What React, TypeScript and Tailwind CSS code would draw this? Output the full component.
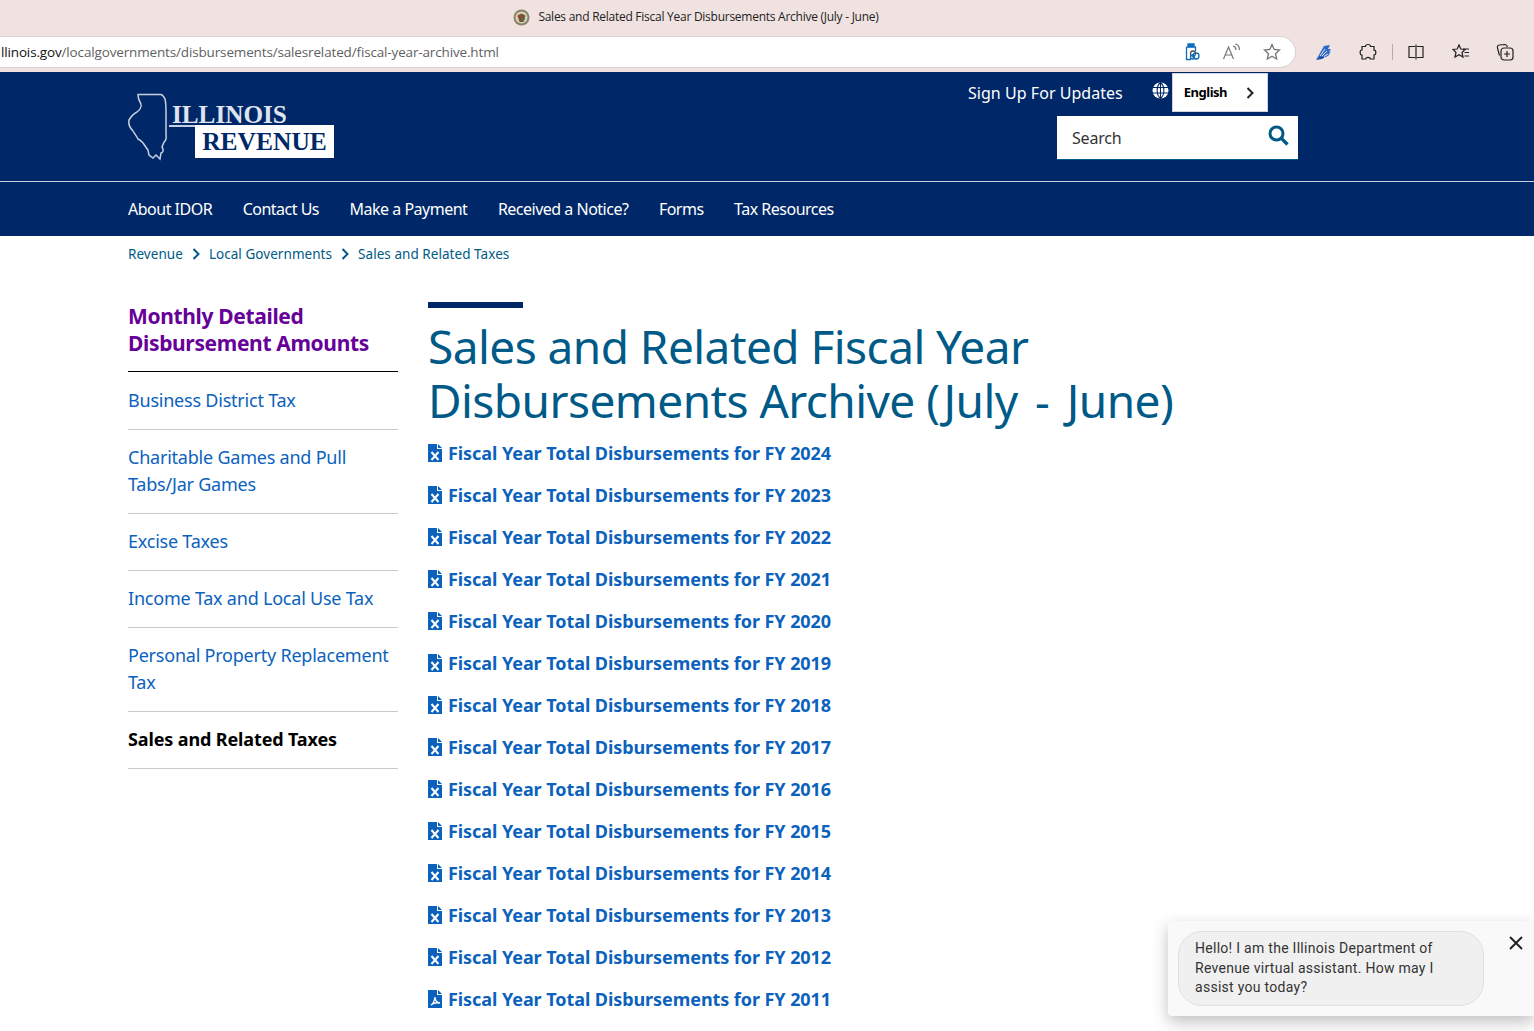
import React from "react";

const years = [2024, 2023, 2022, 2021, 2020, 2019, 2018, 2017, 2016, 2015, 2014, 2013, 2012, 2011];
const nav = ["About IDOR", "Contact Us", "Make a Payment", "Received a Notice?", "Forms", "Tax Resources"];

function FileIcon({ pdf }: { pdf?: boolean }) {
  return (
    <svg width="14" height="18" viewBox="0 0 14 18" className="shrink-0">
      <path d="M0 0H9V5H14V18H0Z" fill="#0b62bd" />
      <path d="M10 0L14 4H10Z" fill="#0b62bd" />
      {pdf ? (
        <path d="M3 15C5 14 7 10 7 7C7 10 9 12.500 12 13C9 12.500 5 13 3 15Z" fill="none" stroke="#fff" strokeWidth="1.300" />
      ) : (
        <path d="M3.500 8L10.500 16M10.500 8L3.500 16" stroke="#fff" strokeWidth="2" />
      )}
    </svg>
  );
}

function Chevron({ className, color = "#005a87" }: { className?: string; color?: string }) {
  return (
    <svg width="8" height="12" viewBox="0 0 8 12" className={className}>
      <path d="M1.500 1L6.500 6L1.500 11" fill="none" stroke={color} strokeWidth="2" />
    </svg>
  );
}

function Toolbar() {
  return (
    <div className="relative h-[72px] bg-[#f0e2e1] flex flex-col font-['Open_Sans',sans-serif]">
      <div className="h-[34px] mb-[2px] flex items-center justify-center gap-2 pr-[142px] text-[12px] text-[#222]">
        <svg width="17" height="17" viewBox="0 0 17 17">
          <circle cx="8.500" cy="8.500" r="8" fill="#8b8367" />
          <circle cx="8.500" cy="8.500" r="6" fill="#d9d2b8" />
          <path d="M4.500 6.500L8.500 4.500L12.500 6.500L10.500 13H6.500Z" fill="#6d5a3a" />
          <circle cx="6.500" cy="7.500" r="1.700" fill="#a33c2e" />
          <circle cx="10.500" cy="10" r="1.300" fill="#3f7a4a" />
        </svg>
        <span className="tracking-[-0.26px]">Sales and Related Fiscal Year Disbursements Archive (July - June)</span>
      </div>
      <div className="flex items-center h-[32px]">
        <div className="w-[1296px] h-[32px] bg-white rounded-r-[16px] border border-l-0 border-[#d8d4d3] flex items-center justify-between pr-[14px] text-[13.5px] tracking-[-0.15px] text-[#5f5f5f]">
          <span className="ml-[1px] whitespace-nowrap"><span className="text-[#111]">llinois.gov</span>/localgovernments/disbursements/salesrelated/fiscal-year-archive.html</span>
          <div className="flex items-center gap-[21px]">
            <svg width="18" height="18" viewBox="0 0 18 18" fill="none" stroke="#0f6cbd" strokeWidth="1.300">
              <path d="M5 1H11V3.500H5Z" fill="#0f6cbd" />
              <path d="M3.500 4H12.500V8M8 16.500H3.500V4" />
              <circle cx="10" cy="10.500" r="2.500" stroke="#555" />
              <circle cx="13" cy="13" r="3" />
              <circle cx="9.500" cy="14" r="2" />
            </svg>
            <svg width="20" height="18" viewBox="0 0 20 18" fill="none" stroke="#777" strokeWidth="1.200">
              <path d="M1.500 16L6.500 4L11.500 16M3.500 12H9.500" />
              <path d="M11 3C13 3.500 14 5 14 7M13 1C16 1.500 17.500 4 17.500 7" />
            </svg>
            <svg width="18" height="18" viewBox="0 0 18 18" fill="none" stroke="#777" strokeWidth="1.300">
              <path d="M9 1.500L11.200 6.500L16.500 7L12.500 10.700L13.700 16L9 13.200L4.300 16L5.500 10.700L1.500 7L6.800 6.500Z" />
            </svg>
          </div>
        </div>
        <div className="flex items-center ml-[19px]">
          <svg width="17" height="17" viewBox="0 0 17 17">
            <path d="M1 16L9 2L15 1L13 5H16L14 7.500H16L13.500 10.500H15L11 13H4Z" fill="#2a6bc9" />
            <path d="M5 12L10 5M7 12L12 7M9 12.500L13 10" stroke="#f0e2e1" strokeWidth="1" />
            <path d="M1 16L4 13H10L7 15Z" fill="#1a4a9a" />
          </svg>
          <svg width="18" height="18" viewBox="0 0 18 18" fill="none" stroke="#222" strokeWidth="1.200" className="ml-[27px]">
            <path d="M6.500 3.500C6.500 0.800 11.500 0.800 11.500 3.500H15V7.200C17.500 7.200 17.500 12 15 12V16H11.200C11.200 13.800 6.800 13.800 6.800 16H3V12.200C0.500 12.200 0.500 7 3 7V3.500Z" />
          </svg>
          <div className="ml-[15px] w-px h-[16px] bg-[#b5aaaa]" />
          <svg width="16" height="16" viewBox="0 0 16 16" fill="none" stroke="#222" strokeWidth="1.200" className="ml-[15px]">
            <path d="M7 2.500H1V13.500H7M9 2.500H15V13.500H9M8 0.500V15.500" />
          </svg>
          <svg width="18" height="18" viewBox="0 0 18 18" fill="none" stroke="#222" strokeWidth="1.200" className="ml-[28px]">
            <path d="M7 2L8.800 6L13 6.500L10 9.500L11 14L7 11.700L3 14L4 9.500L1 6.500L5.200 6Z" />
            <path d="M11 6H17M12.500 9.500H17M12.500 13H17" />
          </svg>
          <svg width="18" height="18" viewBox="0 0 18 18" fill="none" stroke="#222" strokeWidth="1.200" className="ml-[26px]">
            <path d="M3.500 12.500L1.500 5C1 3 2 2 3.500 2L9 1.500C10.500 1.500 11 2.500 11.500 4" />
            <rect x="5" y="5" width="12" height="12" rx="3" />
            <path d="M11 8V14M8 11H14" />
          </svg>
        </div>
      </div>
    </div>
  );
}

function Logo() {
  return (
    <div className="relative w-[206px] h-[68px]">
      <svg width="44" height="68" viewBox="0 0 44 68" className="absolute left-0 top-0">
        <path
          d="M10 1.500H33C35 2 36 4 37 6C38 10 38 14 38 20V40C38 44 39 46 37 48C35 50 35 52 34 54C36 57 35 60 33 60L32 66L28 62L25 65L21 62L20 57C16 52 15 48 10 46C8 42 6 40 5 38C2 35 0 32 1 27C4 22 7 20 9 19C13 16 14 12 12 9C10 6 10 4 10 1.500Z"
          fill="none"
          stroke="#c6cfe0"
          strokeWidth="1.500"
        />
      </svg>
      <div className="absolute left-[44px] top-[7px] font-['Liberation_Serif',serif] font-bold text-[25.2px] leading-[30px] text-[#dfe4ee] whitespace-nowrap">ILLINOIS</div>
      <div className="absolute left-[41px] top-[32px] w-[28px] h-[1.500px] bg-[#c6cfe0]" />
      <div className="absolute left-[67px] top-[32px] w-[139px] h-[33px] bg-white flex items-center justify-center font-['Liberation_Serif',serif] font-bold text-[25.5px] leading-[30px] text-[#002868]">REVENUE</div>
    </div>
  );
}

function Header() {
  return (
    <header className="bg-[#002868] font-['Noto_Sans',sans-serif]">
      <div className="relative h-[109px] flex items-start pl-[128px] pt-[21px]">
        <Logo />
        <div className="absolute left-[968px] top-[1px] flex items-center h-[39px] text-white">
          <span className="text-[16px] tracking-[0.04px]">Sign Up For Updates</span>
          <svg width="17" height="17" viewBox="0 0 17 17" className="ml-[29px] mb-[4px]">
            <circle cx="8.500" cy="8.500" r="8" fill="#fff" />
            <path d="M0 5.500H17M0 11H17M8.500 0V17M8.500 0.500C4 4 4 13 8.500 16.500C13 13 13 4 8.500 0.500" fill="none" stroke="#002868" strokeWidth="1.100" />
          </svg>
          <div className="ml-[3px] w-[96px] h-[39px] bg-white border border-[#d0d4dc] flex items-center justify-between pl-[11px] pr-[13px]">
            <span className="font-bold text-[13px] tracking-[-0.5px] text-black">English</span>
            <Chevron color="#222" />
          </div>
        </div>
        <div className="absolute left-[1057px] top-[44px] w-[241px] h-[44px] bg-white flex items-center justify-between pl-[15px] pr-[9px] border-b border-[#005a87]">
          <span className="text-[16px] text-[#333] tracking-[-0.2px]">Search</span>
          <svg width="21" height="21" viewBox="0 0 21 21" fill="none" stroke="#005a87" className="mb-[5px]">
            <circle cx="8.500" cy="8.500" r="6.500" strokeWidth="3" />
            <path d="M13.500 13.500L19.500 19.500" strokeWidth="3.200" />
          </svg>
        </div>
      </div>
      <div className="border-t border-[#c8d0de] h-[55px] flex items-center pl-[128px] gap-[30.5px] text-white text-[16px] tracking-[-0.5px]">
        {nav.map((n) => (
          <span key={n}>{n}</span>
        ))}
      </div>
    </header>
  );
}

function Side({ children, active, first }: { children: React.ReactNode; active?: boolean; first?: boolean }) {
  return (
    <div className={`border-b border-[#c9c9c9] pb-[15px] leading-[27px] text-[18px] ${first ? "pt-[15px]" : "pt-[14px]"} ${active ? "font-bold text-black tracking-[-0.13px]" : "text-[#0b62bd] tracking-[-0.22px]"}`}>
      {children}
    </div>
  );
}

export default function App() {
  return (
    <div className="w-[1534px] h-[1031px] overflow-hidden relative bg-white font-['Noto_Sans',sans-serif]">
      <Toolbar />
      <Header />
      <div className="h-[36px] mb-[1px] pl-[128px] flex items-center text-[13.5px] tracking-[0.05px] text-[#005a87]">
        <span>Revenue</span>
        <Chevron className="mx-[9px]" />
        <span>Local Governments</span>
        <Chevron className="mx-[9px]" />
        <span>Sales and Related Taxes</span>
      </div>
      <div className="flex pl-[128px] pt-[29px] gap-[30px]">
        <aside className="w-[270px] shrink-0">
          <div className="border-b border-black pt-[1px] pb-[14px] text-[21px] tracking-[-0.35px] leading-[27px] font-bold text-[#660099]">
            Monthly Detailed<br />Disbursement Amounts
          </div>
          <Side first>Business District Tax</Side>
          <Side>Charitable Games and Pull<br />Tabs/Jar Games</Side>
          <Side>Excise Taxes</Side>
          <Side>Income Tax and Local Use Tax</Side>
          <Side>Personal Property Replacement<br />Tax</Side>
          <Side active>Sales and Related Taxes</Side>
        </aside>
        <main className="flex-1">
          <div className="w-[95px] h-[6px] bg-[#002868]" />
          <h1 className="mt-[11px] text-[46px] leading-[54px] text-[#005a87] tracking-[-0.55px]">
            Sales and Related Fiscal Year<br />Disbursements Archive (July <span className="px-[6px]">-</span> June)
          </h1>
          <ul className="mt-[5px]">
            {years.map((y) => (
              <li key={y} className="h-[42px] flex items-center gap-[6px] text-[18px] font-bold text-[#0b62bd] tracking-[-0.07px]">
                <FileIcon pdf={y === 2011} />
                <span>Fiscal Year Total Disbursements for FY {y}</span>
              </li>
            ))}
          </ul>
        </main>
      </div>
      <div className="absolute left-[1168px] top-[921px] w-[366px] h-[95px] bg-[#f9f9f9] rounded-l-[4px] shadow-[0_6px_16px_rgba(0,0,0,0.25)] pt-[10px] pl-[10px] font-['Roboto',sans-serif]">
        <div className="w-[306px] h-[75px] rounded-[24px] bg-[#f0f0f0] border border-[#e0e0e0] pl-[16px] pt-[7px] text-[14px] leading-[19.500px] text-[#333] tracking-[0.28px]">
          Hello! I am the Illinois Department of<br />Revenue virtual assistant. How may I<br />assist you today?
        </div>
        <svg width="14" height="14" viewBox="0 0 14 14" className="absolute left-[341px] top-[15px]" stroke="#222" strokeWidth="2">
          <path d="M1 1L13 13M13 1L1 13" />
        </svg>
      </div>
    </div>
  );
}
